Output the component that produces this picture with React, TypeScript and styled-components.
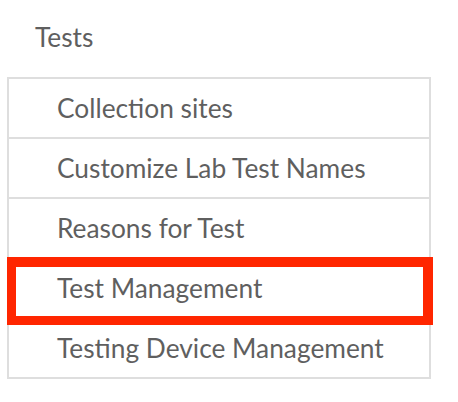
import React from "react";
import styled, { createGlobalStyle } from "styled-components";

const GlobalStyle = createGlobalStyle`
  html, body { margin: 0; padding: 0; background: #ffffff; }
  body { font-family: Lato, "Open Sans", sans-serif; }
`;

const Page = styled.div`
  padding: 17px 0 0 7px;
  width: 458px;
  box-sizing: border-box;
`;

const Heading = styled.h2`
  margin: 0 0 20px 0;
  padding-left: 28px;
  height: 40px;
  line-height: 40px;
  font-size: 26.3px;
  font-weight: 400;
  color: #5f5f5f;
`;

const List = styled.ul`
  list-style: none;
  margin: 0;
  padding: 0;
  width: 424px;
  box-sizing: border-box;
  border: 2px solid #dedede;
`;

const Item = styled.li<{ $highlight?: boolean }>`
  position: relative;
  height: 58px;
  line-height: 58px;
  padding-left: 48px;
  font-size: 26.3px;
  color: #5f5f5f;
  white-space: nowrap;
  & + & {
    border-top: 2px solid #dedede;
  }
  ${(p) =>
    p.$highlight &&
    `
    &::after {
      content: "";
      position: absolute;
      z-index: 2;
      left: -2px;
      top: -2px;
      width: 426px;
      height: 68px;
      box-sizing: border-box;
      border-style: solid;
      border-color: #ff2600;
      border-width: 10px 10px 9px 9px;
      pointer-events: none;
    }
  `}
`;

const items = [
  "Collection sites",
  "Customize Lab Test Names",
  "Reasons for Test",
  "Test Management",
  "Testing Device Management",
];

export default function App() {
  return (
    <Page>
      <GlobalStyle />
      <Heading>Tests</Heading>
      <List>
        {items.map((t) => (
          <Item key={t} $highlight={t === "Test Management"}>
            {t}
          </Item>
        ))}
      </List>
    </Page>
  );
}
